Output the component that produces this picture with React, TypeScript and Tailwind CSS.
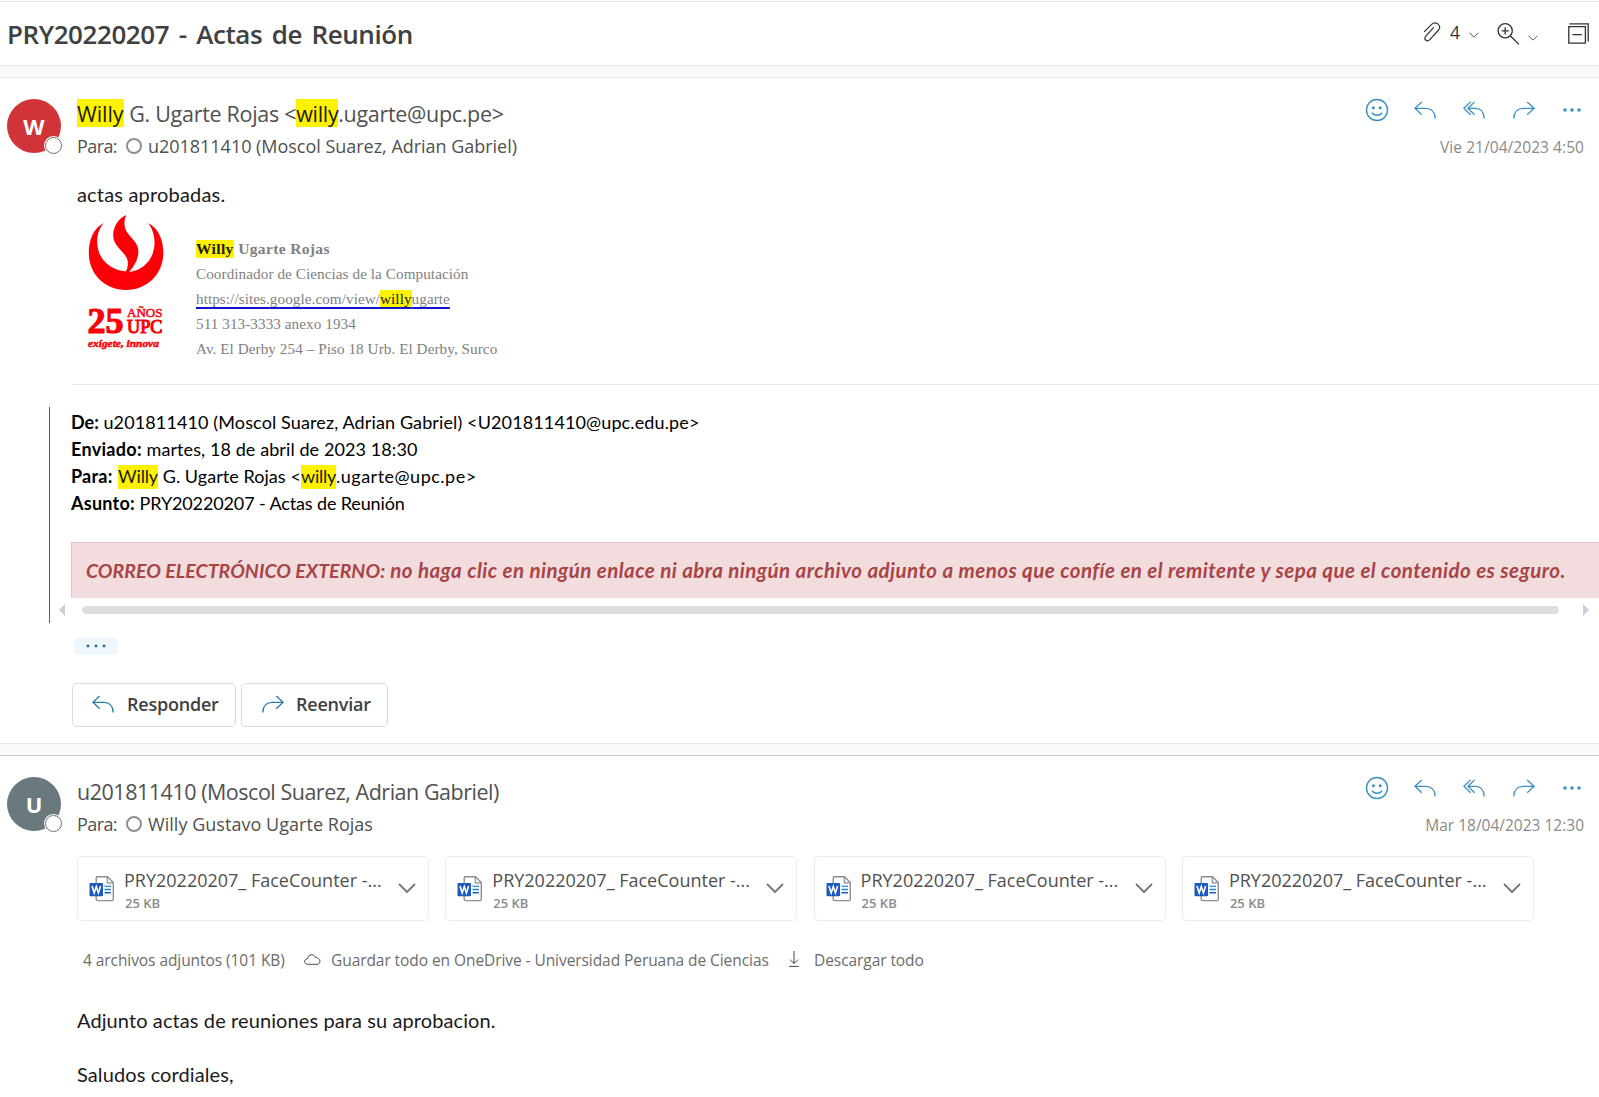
import React from "react";

type IconProps = { className?: string };

const blue = "text-[#3a8fc4]";

function ReplyIcon({ className = "" }: IconProps) {
  return (
    <svg viewBox="0 0 22 18" className={`h-[18px] w-[22px] ${className}`} fill="none" stroke="currentColor" strokeWidth="1.3">
      <path d="M7.8 0.9 L0.9 7.3 L7.8 13.7 M1 7.3 H11.5 C17.5 7.3 21 11 21.2 17.4" />
    </svg>
  );
}

function ReplyAllIcon({ className = "" }: IconProps) {
  return (
    <svg viewBox="0 0 22 18" className={`h-[18px] w-[22px] ${className}`} fill="none" stroke="currentColor" strokeWidth="1.3">
      <path d="M7.6 0.9 L0.9 7.3 L7.6 13.7 M11.6 0.9 L5 7.3 L11.6 13.7 M5 7.3 H12 C17.7 7.3 21 11 21.2 17.4" />
    </svg>
  );
}

function ForwardIcon({ className = "" }: IconProps) {
  return (
    <svg viewBox="0 0 22 18" className={`h-[18px] w-[22px] ${className}`} fill="none" stroke="currentColor" strokeWidth="1.3">
      <path d="M14.2 0.9 L21.1 7.3 L14.2 13.7 M21 7.3 H10.5 C4.5 7.3 1 11 0.8 17.4" />
    </svg>
  );
}

function SmileIcon() {
  return (
    <svg viewBox="0 0 24 24" className="size-6" fill="none" stroke="currentColor" strokeWidth="1.4">
      <circle cx="12" cy="12" r="10.5" />
      <path d="M7 14.6 C9 18.2 15 18.2 17 14.6" />
      <circle cx="8.4" cy="9.7" r="1.5" fill="currentColor" stroke="none" />
      <circle cx="15.2" cy="9.7" r="1.5" fill="currentColor" stroke="none" />
    </svg>
  );
}

function DotsIcon() {
  return (
    <svg viewBox="0 0 18 4" className="h-1 w-[18px]" fill="currentColor">
      <circle cx="2" cy="2" r="1.8" />
      <circle cx="9" cy="2" r="1.8" />
      <circle cx="16" cy="2" r="1.8" />
    </svg>
  );
}

function SmallChevron({ className = "" }: IconProps) {
  return (
    <svg viewBox="0 0 10 6" className={`h-1.5 w-2.5 ${className}`} fill="none" stroke="#555" strokeWidth="1">
      <path d="M0.5 0.7 L5 5.2 L9.5 0.7" />
    </svg>
  );
}

function WordIcon() {
  return (
    <svg viewBox="0 0 26 26" className="size-[26px] shrink-0" fill="none">
      <path d="M7.2 0.8 H18.5 L24.3 6.6 V23 Q24.3 24.6 22.7 24.6 H8.8 Q7.2 24.6 7.2 23 V2.4 Q7.2 0.8 8.8 0.8 Z" fill="#fff" stroke="#8e8e8e" strokeWidth="1.4" />
      <path d="M18.3 1 V6.8 H24.2" stroke="#8e8e8e" strokeWidth="1.2" />
      <path d="M15.5 10.3 H22" stroke="#3f9be8" strokeWidth="1.5" />
      <path d="M15.5 13.5 H22" stroke="#2b7cd3" strokeWidth="1.5" />
      <path d="M15.5 16.7 H22" stroke="#185abd" strokeWidth="1.5" />
      <rect x="0.5" y="7" width="13.5" height="13.3" rx="1" fill="#1b5bbf" />
      <path d="M3 10 L5.2 17 L7.3 10.6 L9.4 17 L11.6 10" stroke="#fff" strokeWidth="1.6" />
    </svg>
  );
}

function Mark({ className = "", children }: { className?: string; children: React.ReactNode }) {
  return <mark className={`inline-block bg-[#fff200] text-[#1c1c00] ${className}`}>{children}</mark>;
}

function Avatar({ letter, className }: { letter: string; className: string }) {
  return (
    <div className={`relative flex size-[54px] shrink-0 items-center justify-center rounded-full text-[22px] font-bold text-white ${className}`}>
      {letter}
      <span className="absolute left-[37px] top-[37px] flex size-[19px] items-center justify-center rounded-full bg-white">
        <span className="size-[17px] rounded-full border border-[#707070] bg-white" />
      </span>
    </div>
  );
}

function MessageHeader({
  letter,
  color,
  name,
  to,
  date,
}: {
  letter: string;
  color: string;
  name: React.ReactNode;
  to: React.ReactNode;
  date: React.ReactNode;
}) {
  return (
    <div className="flex h-[61px] items-start pl-[7px] pr-[15px]">
      <Avatar letter={letter} className={color} />
      <div className="ml-4 flex-1 whitespace-pre text-[#505050]">
        <div className="h-7 text-[21.5px] leading-[29px]">{name}</div>
        <div className="mt-[5px] flex h-7 items-center text-[18px]">
          <span className="w-[49px] tracking-[-0.58px]">Para:</span>
          <span className="mr-[6px] size-4 rounded-full border-2 border-[#8f8f8f]" />
          {to}
        </div>
      </div>
      <div className="flex flex-col items-end">
        <div className={`-mt-px mr-[3px] flex h-6 items-center ${blue}`}>
          <SmileIcon />
          <ReplyIcon className="ml-[25px]" />
          <ReplyAllIcon className="ml-[27px]" />
          <ForwardIcon className="ml-[28px]" />
          <span className="ml-[28px]">
            <DotsIcon />
          </span>
        </div>
        <div className="mt-[13px] whitespace-pre text-[15.5px] leading-6 text-[#8a8a8a]">{date}</div>
      </div>
    </div>
  );
}

function UpcLogo() {
  return (
    <svg viewBox="0 0 78 140" className="h-[140px] w-[78px] shrink-0 overflow-visible" fill="#fb0007">
      <path d="M15.8 9 C5.5 14 0.8 26 0.8 39 C0.8 60 17 76 38 76 C59 76 75.3 60 75.3 39 C75.3 26 70.5 14 60 9 C66.5 17 68.5 29 64.5 40 C61 50 51 57 41.3 58 C46.5 51.5 50.5 45 50.4 37 C50.2 23 30.5 21 38.2 1 C30.5 4.5 25 12.5 25.2 21.5 C25.5 34 38.8 38 39.8 48 C40.1 52 39.2 55 37.8 57.6 C24 56 13 48 10 35 C8 25.5 9.5 16.5 15.8 9 Z" />
      <g fontFamily="Liberation Serif" stroke="#fb0007">
        <text x="-0.5" y="118.7" fontWeight="700" fontSize="36" strokeWidth="1.2">25</text>
        <text x="39" y="102.5" fontSize="13" strokeWidth="0.5">AÑOS</text>
        <text x="39" y="118.5" fontSize="18.2" strokeWidth="1.1">UPC</text>
        <text x="0" y="133" fontWeight="700" fontStyle="italic" fontSize="11.4" strokeWidth="0.5">exígete, innova</text>
      </g>
    </svg>
  );
}

function Attachment() {
  return (
    <div className="flex h-[65px] w-[352px] items-center rounded-[5px] border border-[#ebebeb] pl-[11px] pr-3">
      <WordIcon />
      <div className="ml-[9px] flex-1 whitespace-pre pt-1.5">
        <div className="-mt-0.5 text-[18px] leading-6 text-[#505050]">PRY20220207_ FaceCounter -...</div>
        <div className="pl-px text-[13px] font-semibold leading-[22px] text-[#8a8a8a]">25 KB</div>
      </div>
      <svg viewBox="0 0 18 10" className="-mt-px h-2.5 w-[18px]" fill="none" stroke="#777" strokeWidth="1.9">
        <path d="M1 1 L9 9 L17 1" />
      </svg>
    </div>
  );
}

export default function App() {
  return (
    <div className="h-[1097px] w-full overflow-hidden bg-white pt-px font-['Open_Sans',sans-serif]">
      <header className="flex h-[65px] items-center border-y border-[#e6e6e6] pl-[7px] pr-2.5">
        <h1 className="flex-1 whitespace-pre pt-0.5 text-[26px] font-semibold tracking-[-0.43px] text-[#404040] [word-spacing:3.2px]">PRY20220207 - Actas de Reunión</h1>
        <svg viewBox="0 0 18 20" className="-mt-1 h-5 w-[18px]" fill="none" stroke="#333" strokeWidth="1.2">
          <path d="M1.2 9.8 L8.6 2.4 C12.8 -1.4 19 3.6 15.6 8 L6.8 17.6 C4.2 20.4 0.4 17.6 2.6 14.4 L10.8 5.4" />
        </svg>
        <span className="-mt-1 ml-[9px] text-[17.5px] leading-6 text-[#333]">4</span>
        <SmallChevron className="ml-[9px] mt-0.5" />
        <svg viewBox="0 0 23 22" className="ml-[18px] h-[22px] w-[23px]" fill="none" stroke="#333" strokeWidth="1.3">
          <circle cx="8.2" cy="7.8" r="7.1" />
          <path d="M8.2 4.2 V11.4 M4.6 7.8 H11.8 M13.2 12.8 L22 21.4" />
        </svg>
        <SmallChevron className="ml-2 mt-2" />
        <svg viewBox="0 0 21 21" className="ml-[30px] size-[21px]" fill="none" stroke="#333" strokeWidth="1.3">
          <path d="M0.8 3.6 H17.4 V20.2 H0.8 Z M1.4 0.8 H20.2 V18.6 M4.4 11.6 H13.8" />
        </svg>
      </header>
      <div className="h-3 border-b border-[#e6e6e6] bg-[#fafafa]" />

      <section className="h-[665px] pt-[21px]">
        <MessageHeader
          letter="W"
          color="bg-[#d13438]"
          name={
            <span className="tracking-[-0.3px]">
              <Mark className="h-7 w-[47px] tracking-[-0.1px]">Willy</Mark> G. Ugarte Rojas &lt;<Mark className="h-7 w-[42px]">willy</Mark>.ugarte@upc.pe&gt;
            </span>
          }
          to={<span className="tracking-[-0.025px]">u201811410 (Moscol Suarez, Adrian Gabriel)</span>}
          date={<span className="tracking-[0.06px]">Vie 21/04/2023 4:50</span>}
        />
        <p className="ml-[77px] mt-[21px] font-['Lato',sans-serif] text-[20px] leading-[27px] tracking-[0.18px] text-[#1a1a1a]">actas aprobadas.</p>
        <div className="ml-[88px] flex h-[176px] pt-1.5">
          <UpcLogo />
          <div className="ml-[30px] mt-[22px] whitespace-pre font-['Liberation_Serif',serif] text-[15.2px] leading-[25px] text-[#808080]">
            <div className="text-[15.5px] font-bold tracking-[0.35px]">
              <Mark className="h-[18px] w-[38px] align-baseline leading-[18px]">Willy</Mark> Ugarte Rojas
            </div>
            <div className="tracking-[0.07px]">Coordinador de Ciencias de la Computación</div>
            <div className="tracking-[0.06px]">
              <a className="underline decoration-[#1414c8] decoration-2 underline-offset-[3px]">
                https://sites.google.com/view/<mark className="bg-[#fff200] text-[#1c1c00]">willy</mark>ugarte
              </a>
            </div>
            <div className="tracking-[0.06px]">511 313-3333 anexo 1934</div>
            <div className="tracking-[0.06px]">Av. El Derby 254 – Piso 18 Urb. El Derby, Surco</div>
          </div>
        </div>
        <hr className="ml-[72px] border-[#e8e8e8]" />

        <div className="ml-[49px] mt-[22px] h-[216px] border-l border-[#1f6f9a] pl-[21px]">
          <div className="whitespace-pre pt-0.5 font-['Lato',sans-serif] text-[18px] leading-[27px] text-black">
            <div><b>De:</b> <span className="tracking-[0.12px]">u201811410 (Moscol Suarez, Adrian Gabriel) &lt;U201811410@upc.edu.pe&gt;</span></div>
            <div><b className="tracking-[0.3px]">Enviado:</b> <span className="tracking-[0.09px]">martes, 18 de abril de 2023 18:30</span></div>
            <div className="flex">
              <b className="w-[47px] tracking-[0.25px]">Para: </b>
              <Mark className="mt-0.5 h-6 w-10 leading-[23px] tracking-[-0.13px]">Willy</Mark>
              <span className="w-[143px] tracking-[0.06px]"> G. Ugarte Rojas &lt;</span>
              <Mark className="mt-0.5 h-6 w-[35px] leading-[23px] tracking-[-0.25px]">willy</Mark>
              <span className="tracking-[0.5px]">.ugarte@upc.pe&gt;</span>
            </div>
            <div><b className="tracking-[0.25px]">Asunto:</b> <span className="tracking-[-0.13px]">PRY20220207 - Actas de Reunión</span></div>
          </div>
          <div className="mt-[25px] flex h-14 items-center border-l border-t border-[#e2c3c8] bg-[#f2dcde] pl-3.5 font-['Lato',sans-serif] text-[20.5px] font-bold italic tracking-[0.46px] text-[#a94446]">
            <span className="whitespace-pre">
              <span className="text-[19.5px] tracking-[0.05px]">CORREO ELECTRÓNICO EXTERNO:</span> no haga clic en ningún enlace ni abra ningún archivo adjunto a menos que confíe en el remitente y sepa que el contenido es seguro.
            </span>
          </div>
          <div className="-ml-3 mr-2.5 mt-1.5 flex h-3 items-center">
            <svg viewBox="0 0 6 12" className="h-3 w-1.5" fill="#c9d1d8"><path d="M6 0 V12 L0 6 Z" /></svg>
            <div className="ml-[17px] mr-6 h-2 flex-1 rounded-full bg-[#dedede]" />
            <svg viewBox="0 0 6 12" className="h-3 w-1.5" fill="#c9d1d8"><path d="M0 0 V12 L6 6 Z" /></svg>
          </div>
        </div>

        <div className="ml-[74px] mt-[15px] flex h-[17px] w-11 items-center justify-center rounded-[3px] bg-[#eff6fc] text-[#1f6f9a]">
          <svg viewBox="0 0 20 4" className="-mt-0.5 h-1 w-5" fill="currentColor">
            <circle cx="2" cy="2" r="1.4" /><circle cx="10" cy="2" r="1.4" /><circle cx="18" cy="2" r="1.4" />
          </svg>
        </div>

        <div className="ml-[72px] mt-7 flex gap-[5px] text-[18px] font-semibold text-[#404040]">
          <button className="flex h-11 w-[164px] items-center rounded-[5px] border border-[#dcdcdc] pb-0.5 pl-[19px]">
            <ReplyIcon className="text-[#2b7ba6]" />
            <span className="ml-[13px] tracking-[-0.22px]">Responder</span>
          </button>
          <button className="flex h-11 w-[147px] items-center rounded-[5px] border border-[#dcdcdc] pb-0.5 pl-5">
            <ForwardIcon className="text-[#2b7ba6]" />
            <span className="ml-3 tracking-[-0.22px]">Reenviar</span>
          </button>
        </div>
      </section>

      <div className="h-[13px] border-b border-t border-b-[#c8c8c8] border-t-[#e6e6e6] bg-[#fafafa]" />

      <section className="pt-[21px]">
        <MessageHeader
          letter="U"
          color="bg-[#69797e]"
          name={<span className="tracking-[-0.48px]">u201811410 (Moscol Suarez, Adrian Gabriel)</span>}
          to={<span className="tracking-[0.035px]">Willy Gustavo Ugarte Rojas</span>}
          date={<span>Mar 18/04/2023 12:30</span>}
        />
        <div className="ml-[77px] mt-[18px] flex gap-[16.3px]">
          <Attachment />
          <Attachment />
          <Attachment />
          <Attachment />
        </div>
        <div className="ml-[83px] mt-7 flex h-6 items-center whitespace-pre text-[15.5px] tracking-[-0.07px] text-[#6c6c6c]">
          <span className="w-[221px]">4 archivos adjuntos (101 KB)</span>
          <svg viewBox="0 0 17 11" className="-mt-1 h-[11px] w-[17px]" fill="none" stroke="#444" strokeWidth="1">
            <path d="M4 10.3 C-0.6 10.3 -0.4 4.9 3.6 4.8 C4 0.2 10 -0.8 11.4 3.6 C16 2.8 18 10.3 13 10.3 Z" />
          </svg>
          <span className="ml-[10px] w-[458px]">Guardar todo en OneDrive - Universidad Peruana de Ciencias</span>
          <svg viewBox="0 0 10 16" className="-mt-1 h-4 w-2.5" fill="none" stroke="#444" strokeWidth="1">
            <path d="M5 0 V12.5 M1 8.6 L5 12.6 L9 8.6 M0.3 15.4 H9.7" />
          </svg>
          <span className="ml-[15px]">Descargar todo</span>
        </div>
        <div className="ml-[77px] mt-[34px] font-['Lato',sans-serif] text-[20px] leading-[27px] tracking-[0.1px] text-[#1a1a1a]">
          <p>Adjunto actas de reuniones para su aprobacion.</p>
          <p className="mt-[27px]">Saludos cordiales,</p>
        </div>
      </section>
    </div>
  );
}
